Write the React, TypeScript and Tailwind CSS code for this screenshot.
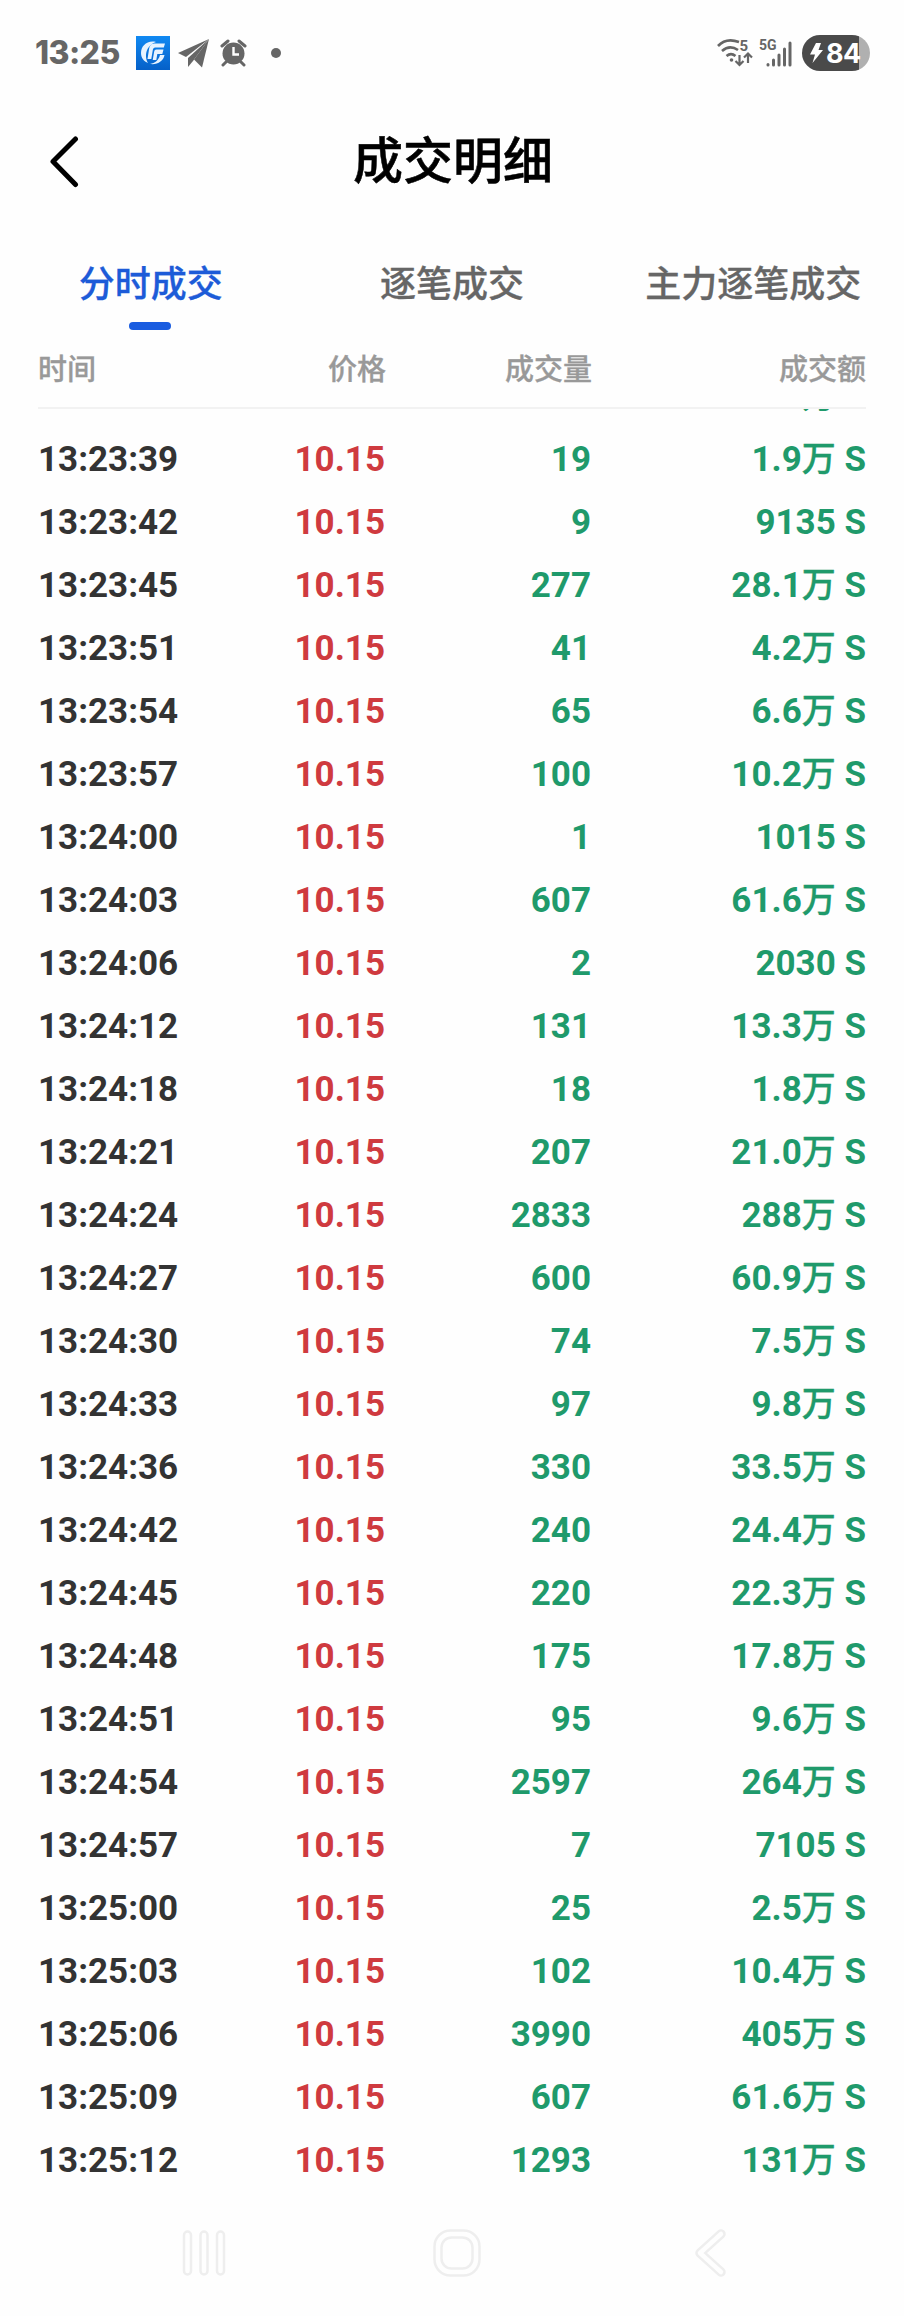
const rows = [
    { time: "13:23:39", price: "10.15", volume: "19", amount: "1.9万 S" },
    { time: "13:23:42", price: "10.15", volume: "9", amount: "9135 S" },
    { time: "13:23:45", price: "10.15", volume: "277", amount: "28.1万 S" },
    { time: "13:23:51", price: "10.15", volume: "41", amount: "4.2万 S" },
    { time: "13:23:54", price: "10.15", volume: "65", amount: "6.6万 S" },
    { time: "13:23:57", price: "10.15", volume: "100", amount: "10.2万 S" },
    { time: "13:24:00", price: "10.15", volume: "1", amount: "1015 S" },
    { time: "13:24:03", price: "10.15", volume: "607", amount: "61.6万 S" },
    { time: "13:24:06", price: "10.15", volume: "2", amount: "2030 S" },
    { time: "13:24:12", price: "10.15", volume: "131", amount: "13.3万 S" },
    { time: "13:24:18", price: "10.15", volume: "18", amount: "1.8万 S" },
    { time: "13:24:21", price: "10.15", volume: "207", amount: "21.0万 S" },
    { time: "13:24:24", price: "10.15", volume: "2833", amount: "288万 S" },
    { time: "13:24:27", price: "10.15", volume: "600", amount: "60.9万 S" },
    { time: "13:24:30", price: "10.15", volume: "74", amount: "7.5万 S" },
    { time: "13:24:33", price: "10.15", volume: "97", amount: "9.8万 S" },
    { time: "13:24:36", price: "10.15", volume: "330", amount: "33.5万 S" },
    { time: "13:24:42", price: "10.15", volume: "240", amount: "24.4万 S" },
    { time: "13:24:45", price: "10.15", volume: "220", amount: "22.3万 S" },
    { time: "13:24:48", price: "10.15", volume: "175", amount: "17.8万 S" },
    { time: "13:24:51", price: "10.15", volume: "95", amount: "9.6万 S" },
    { time: "13:24:54", price: "10.15", volume: "2597", amount: "264万 S" },
    { time: "13:24:57", price: "10.15", volume: "7", amount: "7105 S" },
    { time: "13:25:00", price: "10.15", volume: "25", amount: "2.5万 S" },
    { time: "13:25:03", price: "10.15", volume: "102", amount: "10.4万 S" },
    { time: "13:25:06", price: "10.15", volume: "3990", amount: "405万 S" },
    { time: "13:25:09", price: "10.15", volume: "607", amount: "61.6万 S" },
    { time: "13:25:12", price: "10.15", volume: "1293", amount: "131万 S" },
];

const tabs = ["分时成交", "逐笔成交", "主力逐笔成交"];

function StatusBar() {
    return (
        <div className="flex h-[106px] items-center justify-between pl-[35px] pr-[34px] text-[#666]">
            <div className="flex items-center">
                <span className="w-[101px] font-['Inter'] text-[32px] leading-none font-extrabold tracking-[-0.6px]">13:25</span>
                <svg width="34" height="34" viewBox="0 0 34 34">
                    <defs>
                        <linearGradient id="app" x1="0" y1="0" x2="0" y2="1">
                            <stop offset="0" stopColor="#1089f2" />
                            <stop offset="1" stopColor="#0560c8" />
                        </linearGradient>
                    </defs>
                    <rect width="34" height="34" fill="url(#app)" />
                    <path d="M20 6C11 4 5 10 5 17c0 5 3 8.500 7 10C8.500 21 9 10 20 6z" fill="#e6f3ff" />
                    <path d="M29 7.500H18.500c-4 0-5 3-5.500 6L11.500 23h3.800l1.500-9c.3-1.500 1-2.500 2.400-2.500h8.600z" fill="#e6f3ff" />
                    <path d="M27.500 13.500H20.500c-1.500 0-2 .8-2.300 2L16.700 24h3.600l1-6h5z" fill="#e6f3ff" />
                    <path d="M28.500 19c-1 6-7 10-14.500 9 5-.8 8.500-3.500 10-9z" fill="#e6f3ff" />
                </svg>
                <svg className="ml-2" width="31" height="31" viewBox="0 0 31 31" fill="currentColor">
                    <path d="M31 1L0 15l8 4z" />
                    <path d="M31 1L10 20v9l5-6z" />
                    <path d="M31 1L16 21.500l8 8z" />
                </svg>
                <svg className="ml-[11px]" width="27" height="28" viewBox="0 0 27 28">
                    <path d="M2 7l6-5M25 7l-6-5M6 23l-3 3M21 23l3 3" stroke="currentColor" strokeWidth="3" strokeLinecap="round" />
                    <circle cx="13.500" cy="14.500" r="11" fill="currentColor" />
                    <path d="M13.500 8v7.500h5.500" fill="none" stroke="#fff" strokeWidth="2.400" />
                </svg>
                <span className="ml-[24px] size-[10px] rounded-full bg-[#666]" />
            </div>
            <div className="flex items-center">
                <svg width="36" height="30" viewBox="0 0 36 30" fill="none" stroke="currentColor" strokeWidth="2.600">
                    <path d="M1 8C7 1.500 15 1.500 22 4M5 13c5-4.500 11-4.500 16-1M9.500 18c3-2.500 6-2.500 9 0" />
                    <circle cx="14.500" cy="22" r="1.800" fill="currentColor" stroke="none" />
                    <path d="M22.500 17v10M18.500 23l4 4 4-4M31 25V15.500M27 19.500l4-4 4 4" strokeWidth="2.200" />
                    <text x="22.500" y="13" fontSize="15" fontWeight="700" fontFamily="Roboto" fill="currentColor" stroke="none">5</text>
                </svg>
                <svg className="ml-[6px]" width="33" height="30" viewBox="0 0 33 30" fill="none" stroke="currentColor" strokeWidth="3" strokeLinecap="round">
                    <text x="0" y="12" fontSize="14" fontWeight="700" fontFamily="Roboto" fill="currentColor" stroke="none">5G</text>
                    <path d="M9 27v-.5M14.500 27v-5M20 27v-10M25.500 27V11M31 27V5" />
                </svg>
                <div className="ml-[10px] flex h-[36px] w-[68px] items-center rounded-full bg-linear-to-r from-[#4a4a4a] from-84% to-[#b0b0b0] to-84% pl-[8px] text-white">
                    <svg width="13" height="20" viewBox="0 0 13 20" fill="currentColor">
                        <path d="M6 0h5L8.500 7H13L2.500 20 5 11.500H0z" />
                    </svg>
                    <span className="ml-[3px] font-['Inter'] text-[27px] leading-none font-bold tracking-[-0.5px]">84</span>
                </div>
            </div>
        </div>
    );
}

function NavBar() {
    return (
        <div className="flex h-[124px] items-start justify-between pl-[182px] pr-[177px]">
            <svg className="mt-[38px]" width="44" height="48" viewBox="0 0 44 48" fill="none" stroke="#eee" strokeWidth="2.500">
                <rect x="2" y="1.500" width="7" height="43" rx="3.500" />
                <rect x="18.500" y="1.500" width="7" height="43" rx="3.500" />
                <rect x="35" y="1.500" width="7" height="43" rx="3.500" />
            </svg>
            <svg className="mt-[37px] mr-[7px]" width="48" height="48" viewBox="0 0 48 48" fill="none" stroke="#eee" strokeWidth="2.500">
                <rect x="1.500" y="1.500" width="45" height="45" rx="16" />
                <rect x="8.500" y="8.500" width="31" height="31" rx="10" />
            </svg>
            <svg className="mt-[37px]" width="33" height="48" viewBox="0 0 33 48" fill="none" strokeLinecap="round" strokeLinejoin="round">
                <path d="M27 5L6 24 27 43" stroke="#eee" strokeWidth="9.500" />
                <path d="M27 5L6 24 27 43" stroke="#fefefe" strokeWidth="4.500" />
            </svg>
        </div>
    );
}

function Amount({ value }: { value: string }) {
    const [number, unit] = value.split("万");

    if (unit === undefined) {
        return <span className="text-[#1f9a6b]">{value}</span>;
    }

    return (
        <span className="text-[#1f9a6b]">
            {number}
            <span className="text-[34px] font-medium [-webkit-text-stroke:0.3px]">万</span>
            {unit}
        </span>
    );
}

function App() {
    return (
        <div className="flex h-[2316px] w-[904px] flex-col overflow-hidden bg-[#fefefe] font-['Roboto','Noto_Sans_CJK_SC',sans-serif]">
            <StatusBar />
            <div className="grid h-[125px] grid-cols-[100px_1fr_98px] items-center pb-[13px]">
                <svg className="ml-[48px]" width="32" height="52" viewBox="0 0 32 52" fill="none" stroke="#000" strokeWidth="5" strokeLinecap="round" strokeLinejoin="round">
                    <path d="M27.500 3L5 25.500 27.500 48.500" />
                </svg>
                <h1 className="text-center text-[50px] leading-none font-medium text-black [-webkit-text-stroke:0.5px]">成交明细</h1>
            </div>
            <div className="grid h-[99px] grid-cols-3">
                {tabs.map((tab, index) => (
                    <div key={tab} className={index === 0 ? "flex flex-col items-center text-[#1d5bd8]" : "flex flex-col items-center text-[#666]"}>
                        <span className="mt-[28px] text-[36px] leading-[52px] font-medium [-webkit-text-stroke:0.3px]">{tab}</span>
                        {index === 0 && <span className="mt-[11px] mr-[1px] h-[8px] w-[42px] rounded-full bg-[#195ce0]" />}
                    </div>
                ))}
            </div>
            <div className="mx-[38px] grid h-[79px] shrink-0 grid-cols-[142px_206px_206px_1fr] items-center border-b-2 border-[#f2f2f2] pt-1 text-right text-[29px] font-medium text-[#999] [-webkit-text-stroke:0.3px]">
                <span className="text-left">时间</span>
                <span>价格</span>
                <span>成交量</span>
                <span>成交额</span>
            </div>
            <div className="mx-[38px] flex h-[1783px] shrink-0 flex-col justify-end overflow-hidden">
                {/* row scrolled under the header */}
                <div className="h-[63px] shrink-0 pt-[14px] pr-[30px] text-right text-[34px] leading-none font-medium text-[#1f9a6b]">万</div>
                {rows.map((row) => (
                    <div key={row.time} className="grid h-[63px] shrink-0 grid-cols-[142px_205px_206px_1fr] items-center text-right text-[35px] leading-none font-bold whitespace-nowrap">
                        <span className="text-left text-[#333]">{row.time}</span>
                        <span className="text-[#cf3a3f]">{row.price}</span>
                        <span className="text-[#1f9a6b]">{row.volume}</span>
                        <Amount value={row.amount} />
                    </div>
                ))}
            </div>
            <NavBar />
        </div>
    );
}

export default App;
